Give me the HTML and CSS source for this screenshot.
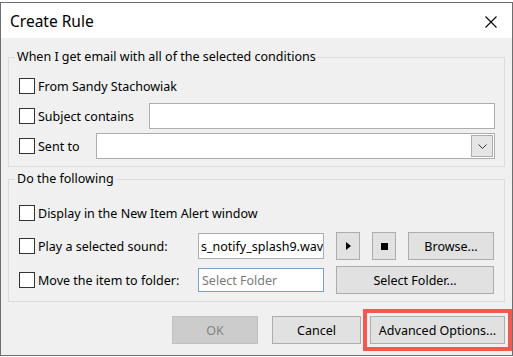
FILE: index.html
```html
<!DOCTYPE html>
<html lang="en">
<head>
    <meta charset="UTF-8">
    <title>Create Rule</title>
    <link rel="stylesheet" href="styles.css">
</head>
<body>
    <div class="window">
        <div class="titlebar">
            <span class="title">Create Rule</span>
            <span class="close">
                <svg width="12" height="12" viewBox="0 0 12 12"><path d="M0.5 0.5 L11.5 11.5 M11.5 0.5 L0.5 11.5" stroke="#000" stroke-width="1.1" fill="none"/></svg>
            </span>
        </div>

        <div class="content">
            <fieldset class="group conditions">
                <legend>When I get email with all of the selected conditions</legend>
                <div class="row">
                    <label class="check"><span class="box"></span>From Sandy Stachowiak</label>
                </div>
                <div class="row">
                    <label class="check"><span class="box"></span>Subject contains</label>
                    <div class="field subject"></div>
                </div>
                <div class="row">
                    <label class="check"><span class="box"></span>Sent to</label>
                    <div class="field combo">
                        <span class="combo-btn">
                            <svg width="9" height="5" viewBox="0 0 9 5"><path d="M0.5 0.5 L4.5 4.5 L8.5 0.5" stroke="#333" stroke-width="1" fill="none"/></svg>
                        </span>
                    </div>
                </div>
            </fieldset>

            <fieldset class="group actions">
                <legend>Do the following</legend>
                <div class="row row-alert">
                    <label class="check"><span class="box"></span>Display in the New Item Alert window</label>
                </div>
                <div class="row row-tall">
                    <label class="check"><span class="box"></span>Play a selected sound:</label>
                    <div class="controls">
                        <div class="field sound">s_notify_splash9.wav</div>
                        <button class="btn icon-btn">
                            <svg width="5" height="8" viewBox="0 0 5 8"><path d="M0 0 L5 4 L0 8 Z" fill="#000"/></svg>
                        </button>
                        <button class="btn icon-btn">
                            <svg width="7" height="7" viewBox="0 0 7 7"><rect width="7" height="7" fill="#000"/></svg>
                        </button>
                        <button class="btn browse">Browse...</button>
                    </div>
                </div>
                <div class="row row-tall">
                    <label class="check"><span class="box"></span>Move the item to folder:</label>
                    <div class="controls">
                        <div class="field folder">Select Folder</div>
                        <button class="btn select-folder">Select Folder...</button>
                    </div>
                </div>
            </fieldset>

            <div class="footer">
                <button class="btn footer-btn ok" disabled>OK</button>
                <button class="btn footer-btn cancel">Cancel</button>
                <button class="btn footer-btn advanced">Advanced Options...</button>
            </div>
        </div>
    </div>
</body>
</html>
```

FILE: styles.css
```css
* {
    margin: 0;
    padding: 0;
    box-sizing: border-box;
}

body {
    background: #ffffff;
    font-family: 'Noto Sans', 'Open Sans', sans-serif;
    font-size: 12.5px;
    color: #000;
}

.window {
    margin-top: 2px;
    width: 513px;
    height: 354px;
    border: 1px solid #6e6e6e;
    background: #f0f0f0;
    display: flex;
    flex-direction: column;
}

.titlebar {
    height: 35px;
    background: #ffffff;
    display: flex;
    align-items: center;
    justify-content: space-between;
    padding: 0 15px 0 9px;
}

.title {
    font-size: 15.5px;
}

.close {
    display: flex;
    margin-top: 3px;
}

.content {
    padding: 11px 7px 0 7px;
}

.group {
    border: 1px solid #dcdcdc;
    padding: 8px 9px 7px 10px;
    min-width: 0;
}

.group legend {
    font-size: 12.5px;
    line-height: 16px;
    padding: 0 2px;
    margin-left: -4px;
}

.row {
    display: flex;
    align-items: center;
    height: 26px;
}

.row + .row {
    margin-top: 4px;
}

.check {
    display: flex;
    align-items: center;
    white-space: nowrap;
}

.box {
    width: 16px;
    height: 16px;
    border: 1px solid #333;
    background: #fff;
    margin-right: 3px;
}

.field {
    height: 26px;
    border: 1px solid #adadad;
    background: #fff;
    margin-left: auto;
    display: flex;
    align-items: center;
    padding: 0 4px;
    white-space: nowrap;
    overflow: hidden;
}

.subject {
    width: 346px;
}

.combo {
    width: 399px;
    justify-content: flex-end;
    padding: 0 1px;
}

.combo-btn {
    width: 22px;
    height: 22px;
    background: #e5e5e5;
    border: 1px solid #acacac;
    display: flex;
    align-items: center;
    justify-content: center;
}

.actions {
    margin-top: 4px;
    padding-top: 13px;
}

.actions .row + .row {
    margin-top: 6px;
}

.row-tall {
    height: 28px;
}

.controls {
    margin-left: auto;
    display: flex;
    align-items: center;
    gap: 12px;
    width: 297px;
    padding-right: 1px;
}

.sound {
    width: 126px;
    margin-left: 0;
    padding: 0 2px;
}

.folder {
    width: 126px;
    height: 24px;
    margin-left: 0;
    border-color: #7a9fd0;
    color: #7a7a7a;
    padding: 0 3px;
}

.btn {
    height: 28px;
    border: 1px solid #adadad;
    background: #e1e1e1;
    font-family: inherit;
    font-size: 12.5px;
    color: #000;
    display: flex;
    align-items: center;
    justify-content: center;
}

.icon-btn {
    width: 24px;
}

.browse {
    width: 86px;
}

.select-folder {
    width: 158px;
}

.footer {
    display: flex;
    justify-content: flex-end;
    margin-top: 14px;
    padding-right: 0;
}

.footer-btn {
    margin-left: 14px;
}

.ok {
    width: 86px;
    background: #cccccc;
    border-color: #bfbfbf;
    color: #838383;
}

.cancel {
    width: 89px;
}

.advanced {
    width: 135px;
    margin-left: 9px;
    outline: 4px solid #f4594f;
    outline-offset: 3px;
}
```
